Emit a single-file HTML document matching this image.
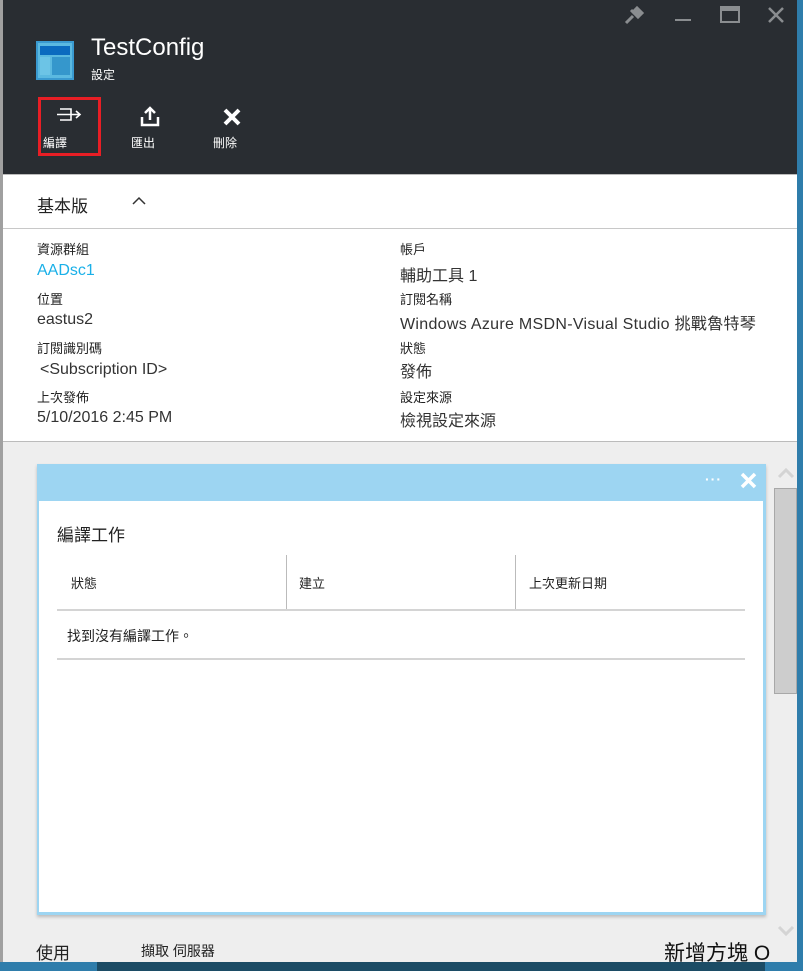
<!DOCTYPE html>
<html><head><meta charset="utf-8"><style>
*{margin:0;padding:0;box-sizing:border-box}
body{width:803px;height:971px;overflow:hidden;position:relative;background:#eeeeee;font-family:"Liberation Sans","Noto Sans CJK TC",sans-serif;color:#222}
.a{position:absolute;white-space:nowrap}
.lbl{font-size:13px;color:#222}
.val{font-size:16px;color:#333}
</style></head><body>
<div class="a" style="left:0;top:0;width:797px;height:174px;background:#292d32"></div>
<div class="a" style="left:797px;top:0;width:6px;height:962px;background:#2f7dab"></div>
<div class="a" style="left:0;top:0;width:3px;height:962px;background:#a0a0a0"></div>
<svg class="a" style="left:620px;top:4px" width="30" height="22" viewBox="0 0 30 22"><path d="M6 19 L13 12 M11 6 L19 14 M13 8 L17 4 L22 9 L18 13 Z" stroke="#8a8d90" stroke-width="3" fill="#8a8d90"/></svg>
<div class="a" style="left:675px;top:19px;width:16px;height:2px;background:#8a8d90"></div>
<div class="a" style="left:720px;top:6px;width:20px;height:17px;border:2px solid #8a8d90;border-top-width:5px"></div>
<svg class="a" style="left:767px;top:6px" width="18" height="18"><path d="M2 2L16 16M16 2L2 16" stroke="#8a8d90" stroke-width="2.5"/></svg>
<div class="a" style="left:36px;top:41px;width:38px;height:39px;background:#5bb9e0;border:2px solid #3a9ad0"></div>
<div class="a" style="left:40px;top:46px;width:30px;height:9px;background:#0b6bbf"></div>
<div class="a" style="left:40px;top:57px;width:10px;height:18px;background:#6cc4e6"></div>
<div class="a" style="left:52px;top:57px;width:18px;height:18px;background:#3597cc"></div>
<div class="a" style="left:91px;top:34px;font-size:24px;color:#fff">TestConfig</div>
<div class="a" style="left:91px;top:66px;font-size:12px;color:#fff">設定</div>
<div class="a" style="left:38px;top:97px;width:63px;height:59px;border:3px solid #e81e25"></div>
<svg class="a" style="left:56px;top:106px" width="26" height="18"><path d="M4 3H15V14H4M1 8.5H24M20 5L24 8.5L20 12" stroke="#fff" stroke-width="1.6" fill="none"/></svg>
<div class="a" style="left:43px;top:134px;font-size:12px;color:#fff">編譯</div>
<svg class="a" style="left:140px;top:105px" width="20" height="22"><path d="M10 15V3M5 8L10 3L15 8M2 12V20H18V12" stroke="#fff" stroke-width="2.5" fill="none"/></svg>
<div class="a" style="left:131px;top:134px;font-size:12px;color:#fff">匯出</div>
<svg class="a" style="left:222px;top:107px" width="20" height="20"><path d="M3 3L17 17M17 3L3 17" stroke="#fff" stroke-width="4"/></svg>
<div class="a" style="left:213px;top:134px;font-size:12px;color:#fff">刪除</div>
<div class="a" style="left:3px;top:174px;width:794px;height:267px;background:#fff;border-top:1px solid #bbb"></div>
<div class="a" style="left:3px;top:228px;width:794px;height:1px;background:#c8c8c8"></div>
<div class="a" style="left:37px;top:192px;font-size:17px">基本版</div>
<svg class="a" style="left:131px;top:196px" width="16" height="10"><path d="M2 8L8 2L14 8" stroke="#333" stroke-width="1.5" fill="none"/></svg>
<div class="a lbl" style="left:37px;top:239px">資源群組</div>
<div class="a val" style="left:37px;top:262px;color:#1ab0e8">AADsc1</div>
<div class="a lbl" style="left:37px;top:289px">位置</div>
<div class="a val" style="left:37px;top:311px">eastus2</div>
<div class="a lbl" style="left:37px;top:338px">訂閱識別碼</div>
<div class="a val" style="left:40px;top:361px">&lt;Subscription ID&gt;</div>
<div class="a lbl" style="left:37px;top:387px">上次發佈</div>
<div class="a val" style="left:37px;top:409px">5/10/2016 2:45 PM</div>
<div class="a lbl" style="left:400px;top:239px">帳戶</div>
<div class="a val" style="left:400px;top:262px">輔助工具 1</div>
<div class="a lbl" style="left:400px;top:289px">訂閱名稱</div>
<div class="a val" style="left:400px;top:310px;letter-spacing:0.3px">Windows Azure MSDN-Visual Studio 挑戰魯特琴</div>
<div class="a lbl" style="left:400px;top:338px">狀態</div>
<div class="a val" style="left:400px;top:358px">發佈</div>
<div class="a lbl" style="left:400px;top:387px">設定來源</div>
<div class="a val" style="left:400px;top:407px">檢視設定來源</div>
<div class="a" style="left:3px;top:441px;width:794px;height:1px;background:#bbb"></div>
<div class="a" style="left:37px;top:464px;width:729px;height:451px;background:#9dd5f2;box-shadow:0 2px 3px #bbb"></div>
<div class="a" style="left:39px;top:501px;width:724px;height:411px;background:#fff"></div>
<div class="a" style="left:705px;top:471px;font-size:14px;color:#fff;font-weight:bold;letter-spacing:1px">···</div>
<svg class="a" style="left:740px;top:472px" width="17" height="17"><path d="M2 2L15 15M15 2L2 15" stroke="#fff" stroke-width="3.5"/></svg>
<div class="a" style="left:57px;top:521px;font-size:17px">編譯工作</div>
<div class="a" style="left:286px;top:555px;width:1px;height:55px;background:#bbb"></div>
<div class="a" style="left:515px;top:555px;width:1px;height:55px;background:#bbb"></div>
<div class="a" style="left:57px;top:609px;width:688px;height:2px;background:#d4d4d4"></div>
<div class="a" style="left:57px;top:658px;width:688px;height:2px;background:#d4d4d4"></div>
<div class="a lbl" style="left:71px;top:573px">狀態</div>
<div class="a lbl" style="left:299px;top:573px">建立</div>
<div class="a lbl" style="left:529px;top:573px">上次更新日期</div>
<div class="a" style="left:67px;top:626px;font-size:14px">找到沒有編譯工作。</div>
<svg class="a" style="left:776px;top:466px" width="20" height="14"><path d="M3 11L10 4L17 11" stroke="#d4d4d4" stroke-width="3" fill="none"/></svg>
<div class="a" style="left:774px;top:488px;width:23px;height:206px;background:#cdcdcd;border:1px solid #a8a8a8"></div>
<svg class="a" style="left:776px;top:924px" width="20" height="14"><path d="M3 3L10 10L17 3" stroke="#d4d4d4" stroke-width="3" fill="none"/></svg>
<div class="a" style="left:36px;top:939px;font-size:17px">使用</div>
<div class="a" style="left:141px;top:941px;font-size:14px">擷取 伺服器</div>
<div class="a" style="left:664px;top:937px;font-size:21px;color:#111">新增方塊 O</div>
<div class="a" style="left:0;top:962px;width:97px;height:9px;background:#2f7dab"></div>
<div class="a" style="left:97px;top:962px;width:668px;height:9px;background:#1c4c65"></div>
<div class="a" style="left:765px;top:962px;width:38px;height:9px;background:#2f7dab"></div>
</body></html>
